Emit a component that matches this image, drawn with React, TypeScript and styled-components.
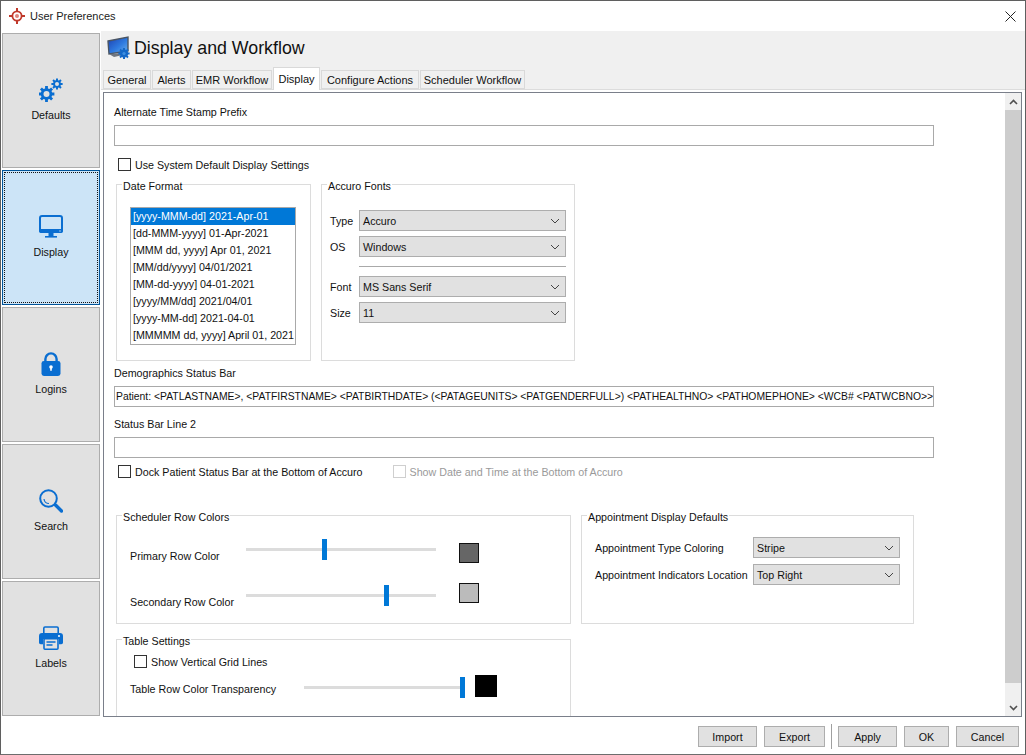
import React from 'react'
import styled, { createGlobalStyle } from 'styled-components'

const GlobalStyle = createGlobalStyle`
	html, body {
		margin: 0;
		padding: 0;
		background: #fff;
	}
	* {
		box-sizing: border-box;
	}
`

const Window = styled.div`
	width: 1026px;
	height: 755px;
	display: flex;
	flex-direction: column;
	overflow: hidden;
	background: #fff;
	border: 1px solid #5f5f5f;
	border-bottom-color: #6d6d6d;
	font-family: 'Liberation Sans', Arial, sans-serif;
	font-size: 10.7px;
	color: #111;
`

const TitleBar = styled.div`
	height: 30px;
	flex: none;
	display: flex;
	align-items: center;
	padding: 0 8px;
	font-size: 11px;
	color: #222;
	svg {
		margin-right: 5px;
	}
`

const CloseButton = styled.div`
	margin-left: auto;
	margin-right: 1px;
	display: flex;
	svg {
		margin: 0;
	}
`

const Body = styled.div`
	flex: 1;
	min-height: 0;
	display: flex;
`

const Rail = styled.nav`
	width: 100px;
	flex: none;
	display: flex;
	flex-direction: column;
	gap: 2px;
	padding: 2px 0 0 1px;
`

const RailButton = styled.div<{ $active?: boolean }>`
	position: relative;
	width: 98px;
	height: 135px;
	display: flex;
	flex-direction: column;
	align-items: center;
	justify-content: center;
	gap: 7px;
	padding-bottom: 2px;
	line-height: 13px;
	background: ${(p) => (p.$active ? '#cce4f7' : '#e1e1e1')};
	border: 1px solid ${(p) => (p.$active ? '#005499' : '#adadad')};
	color: #111;
	&::after {
		content: '';
		display: ${(p) => (p.$active ? 'block' : 'none')};
		position: absolute;
		inset: 1px;
		border: 1px dotted #111;
	}
`

const RailIcon = styled.div`
	height: 24px;
	display: flex;
	align-items: center;
	justify-content: center;
`

const Main = styled.div`
	flex: 1;
	min-width: 0;
	display: flex;
	flex-direction: column;
`

const Header = styled.div`
	height: 34px;
	flex: none;
	display: flex;
	align-items: center;
	gap: 3px;
	padding-left: 6px;
	background: #f0f0f0;
`

const HeaderTitle = styled.h1`
	margin: 0;
	font-size: 17.8px;
	font-weight: normal;
	color: #111;
`

const TabRow = styled.div`
	height: 24px;
	flex: none;
	display: flex;
	align-items: flex-end;
	padding-left: 2px;
	position: relative;
	z-index: 1;
	font-size: 11px;
	background: #f0f0f0;
`

const Tab = styled.div<{ $active?: boolean; $w: number }>`
	width: ${(p) => p.$w}px;
	height: ${(p) => (p.$active ? '23px' : '19px')};
	margin-bottom: ${(p) => (p.$active ? '-1px' : '0')};
	margin-right: 1px;
	display: flex;
	align-items: center;
	justify-content: center;
	background: ${(p) => (p.$active ? '#fff' : '#f0f0f0')};
	border: 1px solid #d9d9d9;
	border-bottom: ${(p) => (p.$active ? 'none' : '1px solid #d9d9d9')};
	padding-bottom: ${(p) => (p.$active ? '1px' : '0')};
`

const TabPane = styled.div`
	flex: 1;
	min-height: 0;
	display: flex;
	background: #fff;
	border-top: 1px solid #dcdcdc;
	padding: 2px 3px 0 2px;
`

const Panel = styled.div`
	flex: 1;
	min-width: 0;
	display: flex;
	background: #fff;
	border: 1px solid #7a7f8a;
	overflow: hidden;
`

const Scroller = styled.div`
	flex: 1;
	min-width: 0;
	overflow: hidden;
	padding: 13px 0 0 10px;
`

const FieldLabel = styled.div<{ $top?: number }>`
	height: 13px;
	line-height: 13px;
	margin-top: ${(p) => p.$top ?? 0}px;
`

const TextField = styled.div`
	width: 820px;
	height: 21px;
	line-height: 19px;
	margin-top: 6px;
	padding: 0 1px;
	font-size: 10.36px;
	border: 1px solid #a9a9a9;
	white-space: nowrap;
	overflow: hidden;
	background: #fff;
`

const CheckRow = styled.div<{ $left?: number; $top?: number }>`
	display: flex;
	align-items: center;
	height: 13px;
	margin-left: ${(p) => p.$left ?? 4}px;
	margin-top: ${(p) => p.$top ?? 0}px;
`

const CheckLabel = styled.label<{ $disabled?: boolean }>`
	display: flex;
	align-items: center;
	gap: 4px;
	margin-right: 30px;
	color: ${(p) => (p.$disabled ? '#9a9a9a' : 'inherit')};
`

const CheckBox = styled.span<{ $disabled?: boolean }>`
	width: 13px;
	height: 13px;
	flex: none;
	background: #fff;
	border: 1px solid ${(p) => (p.$disabled ? '#cfcfcf' : '#333')};
`

const GroupRow = styled.div<{ $top: number }>`
	display: flex;
	gap: 10px;
	margin-top: ${(p) => p.$top}px;
	margin-left: 2px;
	align-items: flex-start;
`

const Group = styled.fieldset<{ $w: number; $h: number }>`
	width: ${(p) => p.$w}px;
	height: ${(p) => p.$h}px;
	flex: none;
	margin: 0;
	padding: 0;
	border: 1px solid #dcdcdc;
	min-width: 0;
`

const Legend = styled.legend`
	margin-left: 5px;
	padding: 4px 1px 0;
	height: 17px;
	line-height: 13px;
`

const DateList = styled.ul`
	list-style: none;
	width: 166px;
	height: 138px;
	margin: 14px 0 0 13px;
	padding: 0;
	border: 1px solid #a9a9a9;
	background: #fff;
`

const DateItem = styled.li<{ $selected?: boolean }>`
	height: 17px;
	line-height: 17px;
	padding-left: 2px;
	white-space: nowrap;
	overflow: hidden;
	background: ${(p) => (p.$selected ? '#0078d7' : 'transparent')};
	color: ${(p) => (p.$selected ? '#fff' : 'inherit')};
`

const FontGrid = styled.div`
	display: grid;
	grid-template-columns: 29px 207px;
	row-gap: 5px;
	align-items: center;
	margin: 17px 0 0 8px;
`

const Divider = styled.hr`
	grid-column: 2;
	width: 100%;
	height: 1px;
	margin: 4px 0;
	border: 0;
	background: #a9a9a9;
`

const GridLabel = styled.span`
	white-space: nowrap;
`

const Select = styled.div`
	height: 21px;
	display: flex;
	align-items: center;
	justify-content: space-between;
	padding: 0 5px 0 3px;
	background: #e1e1e1;
	border: 1px solid #adadad;
`

const SliderGrid = styled.div`
	display: grid;
	grid-template-columns: 116px 190px 1fr;
	grid-auto-rows: 46px;
	margin: 13px 0 0 13px;
`

const SliderRow = styled.div`
	display: contents;
`

const SliderLabel = styled.span`
	padding-top: 13px;
	line-height: 13px;
`

const Track = styled.div<{ $w: number }>`
	position: relative;
	width: ${(p) => p.$w}px;
	height: 3px;
	margin-top: 11px;
	background: #dcdcdc;
`

const Thumb = styled.div`
	position: absolute;
	top: -9px;
	width: 5px;
	height: 21px;
	background: #0078d7;
`

const Swatch = styled.div<{ $color: string; $top: number }>`
	width: 20px;
	height: 20px;
	margin: ${(p) => p.$top}px 0 0 23px;
	background: ${(p) => p.$color};
	border: 1px solid #111;
`

const TableGroupBody = styled.div`
	padding-top: 7px;
`

const TransparencyRow = styled.div`
	display: flex;
	align-items: flex-start;
	margin: 7px 0 0 13px;
`

const TransparencyLabel = styled.span`
	width: 174px;
	line-height: 13px;
	padding-top: 8px;
`

const BlackSwatch = styled.div`
	width: 22px;
	height: 22px;
	margin-left: 11px;
	background: #000;
`

const ApptGrid = styled.div`
	display: grid;
	grid-template-columns: 158px 147px;
	row-gap: 6px;
	align-items: center;
	margin: 13px 0 0 13px;
`

const ScrollBar = styled.div`
	width: 16px;
	flex: none;
	display: flex;
	flex-direction: column;
	background: #f0f0f0;
`

const ScrollArrow = styled.div<{ $h: number }>`
	height: ${(p) => p.$h}px;
	flex: none;
	display: flex;
	align-items: center;
	justify-content: center;
`

const ScrollThumb = styled.div`
	height: 573px;
	flex: none;
	background: #cdcdcd;
`

const ScrollFill = styled.div`
	flex: 1;
`

const Footer = styled.div`
	height: 37px;
	flex: none;
	display: flex;
	justify-content: flex-end;
	align-items: flex-start;
	gap: 7px;
	padding: 9px 6px 0 0;
	background: #fff;
`

const FooterButton = styled.button<{ $w: number }>`
	width: ${(p) => p.$w}px;
	height: 21px;
	padding: 0;
	font: inherit;
	color: #111;
	background: #e1e1e1;
	border: 1px solid #adadad;
`

const FooterSep = styled.div`
	width: 1px;
	height: 25px;
	margin: -2px -1px 0 -1px;
	background: #a0a0a0;
`

const Chevron = () => (
	<svg width="10" height="6" viewBox="0 0 10 6" fill="none" stroke="#444" strokeWidth="1">
		<path d="M1 1l4 4 4-4" />
	</svg>
)

const ScrollChevron = ({ up }: { up?: boolean }) => (
	<svg width="9" height="6" viewBox="0 0 9 6" fill="none" stroke="#505050" strokeWidth="1.6">
		<path d={up ? 'M1 5l3.5-3.5L8 5' : 'M1 1l3.5 3.5L8 1'} />
	</svg>
)

const Logo = () => (
	<svg width="16" height="16" viewBox="0 0 16 16" fill="none" stroke="#c0392b">
		<circle cx="8" cy="8" r="4.6" strokeWidth="1.8" />
		<circle cx="8" cy="8" r="2" fill="#e0857c" stroke="none" />
		<path d="M8 0v3.2M8 12.8V16M0 8h3.2M12.8 8H16" strokeWidth="2" />
	</svg>
)

const CloseIcon = () => (
	<svg width="11" height="11" viewBox="0 0 11 11" stroke="#222" strokeWidth="1">
		<path d="M.5.5l10 10M10.5.5l-10 10" />
	</svg>
)

const gearPath = (cx: number, cy: number, r: number, teeth: number, tooth: number) => {
	const parts: string[] = []
	const step = (Math.PI * 2) / teeth
	for (let i = 0; i < teeth; i++) {
		const a = i * step
		const pts = [
			[r, a - step * 0.32],
			[r + tooth, a - step * 0.22],
			[r + tooth, a + step * 0.22],
			[r, a + step * 0.32],
		]
		pts.forEach(([rad, ang], j) => {
			const x = (cx + rad * Math.cos(ang)).toFixed(2)
			const y = (cy + rad * Math.sin(ang)).toFixed(2)
			parts.push(`${i === 0 && j === 0 ? 'M' : 'L'}${x} ${y}`)
		})
	}
	return parts.join(' ') + ' Z'
}

const GearsIcon = () => (
	<svg width="24" height="24" viewBox="0 0 24 24">
		<path d={gearPath(7.5, 16, 5.8, 8, 2.2)} fill="#0a6ed1" />
		<circle cx="7.5" cy="16" r="3" fill="#e1e1e1" />
		<path d={gearPath(18, 6, 4, 8, 1.7)} fill="#0a6ed1" />
		<circle cx="18" cy="6" r="2" fill="#e1e1e1" />
	</svg>
)

const DisplayIcon = () => (
	<svg width="24" height="23" viewBox="0 0 24 23">
		<rect x="1" y="1" width="22" height="16" rx="2" fill="none" stroke="#0a6ed1" strokeWidth="2" />
		<path d="M0 14h24v2a2 2 0 0 1-2 2H2a2 2 0 0 1-2-2z" fill="#0a6ed1" />
		<path d="M9.5 18h5v3h-5z" fill="#0a6ed1" />
		<path d="M6 21h12v1.6H6z" fill="#0a6ed1" />
		<circle cx="21" cy="16" r=".7" fill="#cce4f7" />
	</svg>
)

const LockIcon = () => (
	<svg width="20" height="24" viewBox="0 0 20 24">
		<path d="M4.4 10V7a5.6 5.6 0 0 1 11.2 0v3" fill="none" stroke="#0a6ed1" strokeWidth="2.4" />
		<rect x="0.5" y="9" width="19" height="15" rx="2.4" fill="#0a6ed1" />
		<circle cx="10" cy="15" r="1.8" fill="#fff" />
		<path d="M9.2 15.5h1.6v3.2H9.2z" fill="#fff" />
	</svg>
)

const SearchIcon = () => (
	<svg width="24" height="24" viewBox="0 0 24 24" fill="none" stroke="#0a6ed1">
		<circle cx="9.5" cy="9.5" r="8.3" strokeWidth="2" />
		<path d="M5 10a5 5 0 0 0 5 4.5" strokeWidth="1.2" />
		<path d="M16.5 16l6 6" strokeWidth="3.4" strokeLinecap="round" />
	</svg>
)

const PrinterIcon = () => (
	<svg width="24" height="24" viewBox="0 0 24 24">
		<path d="M4.8 7V2.2C4.8 1.5 5.3 1 6 1h12c.7 0 1.2.5 1.2 1.2V7" fill="none" stroke="#0a6ed1" strokeWidth="1.6" />
		<path d="M3 7h18a3 3 0 0 1 3 3v6.5c0 1-.8 1.7-1.7 1.7H20v-5H4v5H1.7C.8 18.2 0 17.5 0 16.5V10a3 3 0 0 1 3-3z" fill="#0a6ed1" />
		<rect x="5" y="12.8" width="14" height="10.4" rx="1" fill="#e1e1e1" stroke="#0a6ed1" strokeWidth="1.6" />
		<path d="M7.5 16h9M7.5 19h6" stroke="#0a6ed1" strokeWidth="1.4" />
		<circle cx="20" cy="10" r="1" fill="#fff" />
	</svg>
)

const HeaderIcon = () => (
	<svg width="24" height="25" viewBox="0 0 24 25">
		<defs>
			<linearGradient id="screen" x1="0" y1="0" x2="1" y2="1">
				<stop offset="0" stopColor="#1c3fb0" />
				<stop offset="0.55" stopColor="#2f7be0" />
				<stop offset="1" stopColor="#6fb4ee" />
			</linearGradient>
		</defs>
		<path d="M1 5l20-4v14L2 18z" fill="url(#screen)" stroke="#4a5563" strokeWidth="1.4" />
		<path d="M2 18l5 3 9-2-1-2z" fill="#6f7680" />
		<path d={gearPath(17, 17.5, 4.2, 8, 1.5)} fill="#1468c8" />
		<circle cx="17" cy="17.5" r="1.6" fill="#3f8fe0" />
	</svg>
)

const tabs = [
	{ label: 'General', w: 48 },
	{ label: 'Alerts', w: 39 },
	{ label: 'EMR Workflow', w: 80 },
	{ label: 'Display', w: 47, active: true },
	{ label: 'Configure Actions', w: 98 },
	{ label: 'Scheduler Workflow', w: 105 },
]

const dateFormats = [
	'[yyyy-MMM-dd] 2021-Apr-01',
	'[dd-MMM-yyyy] 01-Apr-2021',
	'[MMM dd, yyyy] Apr 01, 2021',
	'[MM/dd/yyyy] 04/01/2021',
	'[MM-dd-yyyy] 04-01-2021',
	'[yyyy/MM/dd] 2021/04/01',
	'[yyyy-MM-dd] 2021-04-01',
	'[MMMMM dd, yyyy] April 01, 2021',
]

const demographics =
	'Patient: <PATLASTNAME>, <PATFIRSTNAME> <PATBIRTHDATE> (<PATAGEUNITS> <PATGENDERFULL>) <PATHEALTHNO> <PATHOMEPHONE> <WCB# <PATWCBNO>>'

const SelectBox = ({ value }: { value: string }) => (
	<Select>
		{value}
		<Chevron />
	</Select>
)

const App = () => (
	<>
		<GlobalStyle />
		<Window>
			<TitleBar>
				<Logo />
				User Preferences
				<CloseButton>
					<CloseIcon />
				</CloseButton>
			</TitleBar>
			<Body>
				<Rail>
					<RailButton>
						<RailIcon>
							<GearsIcon />
						</RailIcon>
						Defaults
					</RailButton>
					<RailButton $active>
						<RailIcon>
							<DisplayIcon />
						</RailIcon>
						Display
					</RailButton>
					<RailButton>
						<RailIcon>
							<LockIcon />
						</RailIcon>
						Logins
					</RailButton>
					<RailButton>
						<RailIcon>
							<SearchIcon />
						</RailIcon>
						Search
					</RailButton>
					<RailButton>
						<RailIcon>
							<PrinterIcon />
						</RailIcon>
						Labels
					</RailButton>
				</Rail>
				<Main>
					<Header>
						<HeaderIcon />
						<HeaderTitle>Display and Workflow</HeaderTitle>
					</Header>
					<TabRow>
						{tabs.map((t) => (
							<Tab key={t.label} $w={t.w} $active={t.active}>
								{t.label}
							</Tab>
						))}
					</TabRow>
					<TabPane>
						<Panel>
							<Scroller>
								<FieldLabel>Alternate Time Stamp Prefix</FieldLabel>
								<TextField />
								<CheckRow $top={12}>
									<CheckLabel>
										<CheckBox />
										Use System Default Display Settings
									</CheckLabel>
								</CheckRow>
								<GroupRow $top={5}>
									<Group $w={195} $h={185}>
										<Legend>Date Format</Legend>
										<DateList>
											{dateFormats.map((d, i) => (
												<DateItem key={d} $selected={i === 0}>
													{d}
												</DateItem>
											))}
										</DateList>
									</Group>
									<Group $w={254} $h={185}>
										<Legend>Accuro Fonts</Legend>
										<FontGrid>
											<GridLabel>Type</GridLabel>
											<SelectBox value="Accuro" />
											<GridLabel>OS</GridLabel>
											<SelectBox value="Windows" />
											<Divider />
											<GridLabel>Font</GridLabel>
											<SelectBox value="MS Sans Serif" />
											<GridLabel>Size</GridLabel>
											<SelectBox value="11" />
										</FontGrid>
									</Group>
								</GroupRow>
								<FieldLabel $top={6}>Demographics Status Bar</FieldLabel>
								<TextField>{demographics}</TextField>
								<FieldLabel $top={11}>Status Bar Line 2</FieldLabel>
								<TextField />
								<CheckRow $top={7}>
									<CheckLabel>
										<CheckBox />
										Dock Patient Status Bar at the Bottom of Accuro
									</CheckLabel>
									<CheckLabel $disabled>
										<CheckBox $disabled />
										Show Date and Time at the Bottom of Accuro
									</CheckLabel>
								</CheckRow>
								<GroupRow $top={29}>
									<Group $w={455} $h={117}>
										<Legend>Scheduler Row Colors</Legend>
										<SliderGrid>
											<SliderRow>
												<SliderLabel>Primary Row Color</SliderLabel>
												<Track $w={190}>
													<Thumb style={{ left: 76 }} />
												</Track>
												<Swatch $color="#666" $top={6} />
											</SliderRow>
											<SliderRow>
												<SliderLabel>Secondary Row Color</SliderLabel>
												<Track $w={190}>
													<Thumb style={{ left: 138 }} />
												</Track>
												<Swatch $color="#bbb" $top={0} />
											</SliderRow>
										</SliderGrid>
									</Group>
									<Group $w={333} $h={117}>
										<Legend>Appointment Display Defaults</Legend>
										<ApptGrid>
											<GridLabel>Appointment Type Coloring</GridLabel>
											<SelectBox value="Stripe" />
											<GridLabel>Appointment Indicators Location</GridLabel>
											<SelectBox value="Top Right" />
										</ApptGrid>
									</Group>
								</GroupRow>
								<GroupRow $top={7}>
									<Group $w={455} $h={100}>
										<Legend>Table Settings</Legend>
										<TableGroupBody>
											<CheckRow $left={17}>
												<CheckLabel>
													<CheckBox />
													Show Vertical Grid Lines
												</CheckLabel>
											</CheckRow>
											<TransparencyRow>
												<TransparencyLabel>Table Row Color Transparency</TransparencyLabel>
												<Track $w={160}>
													<Thumb style={{ left: 156 }} />
												</Track>
												<BlackSwatch />
											</TransparencyRow>
										</TableGroupBody>
									</Group>
								</GroupRow>
							</Scroller>
							<ScrollBar>
								<ScrollArrow $h={17}>
									<ScrollChevron up />
								</ScrollArrow>
								<ScrollThumb />
								<ScrollFill />
								<ScrollArrow $h={16}>
									<ScrollChevron />
								</ScrollArrow>
							</ScrollBar>
						</Panel>
					</TabPane>
				</Main>
			</Body>
			<Footer>
				<FooterButton $w={59}>Import</FooterButton>
				<FooterButton $w={61}>Export</FooterButton>
				<FooterSep />
				<FooterButton $w={59}>Apply</FooterButton>
				<FooterButton $w={45}>OK</FooterButton>
				<FooterButton $w={63}>Cancel</FooterButton>
			</Footer>
		</Window>
	</>
)

export default App
